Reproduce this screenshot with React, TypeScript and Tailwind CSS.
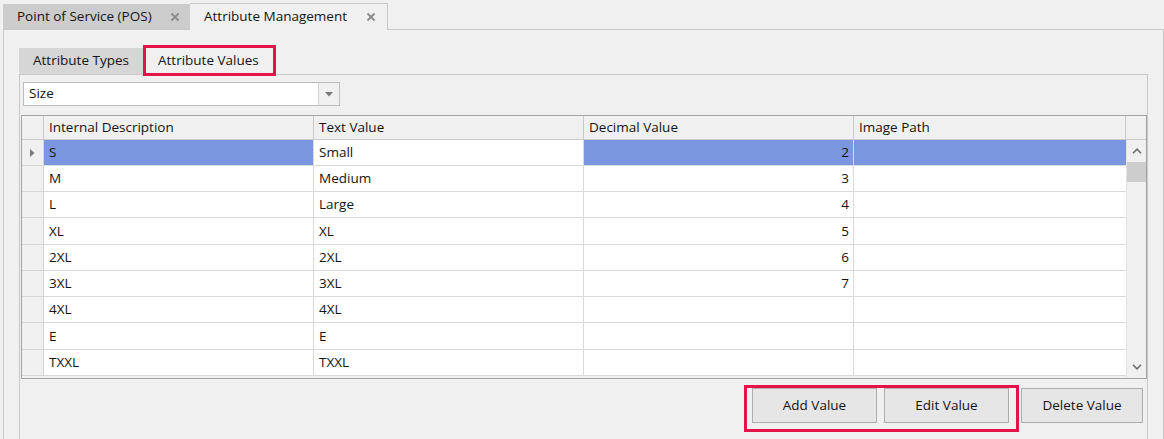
import React from "react";

const rows: [string, string, string][] = [
  ["S", "Small", "2"],
  ["M", "Medium", "3"],
  ["L", "Large", "4"],
  ["XL", "XL", "5"],
  ["2XL", "2XL", "6"],
  ["3XL", "3XL", "7"],
  ["4XL", "4XL", ""],
  ["E", "E", ""],
  ["TXXL", "TXXL", ""],
];

function CloseX() {
  return (
    <svg width="10" height="10" viewBox="0 0 10 10" className="shrink-0">
      <path d="M1.5 1.5 L8.5 8.5 M8.5 1.5 L1.5 8.5" stroke="#8a8a8a" strokeWidth="1.8" />
    </svg>
  );
}

export default function App() {
  return (
    <div
      className="w-[1164px] h-[439px] bg-[#f0f0f0] flex flex-col overflow-hidden text-[#141414] text-[13.5px] leading-none"
      style={{ fontFamily: '"Open Sans", "Noto Sans", sans-serif' }}
    >
      {/* outer tab strip */}
      <div className="flex items-end h-[30px] pl-[3px] shrink-0">
        <div className="h-[26px] w-[187px] bg-[#cccccc] border-b border-[#c8c8c8] flex items-center pl-[14px] pr-[10px] justify-between">
          <span>Point of Service (POS)</span>
          <CloseX />
        </div>
        <div className="h-[27px] w-[198px] bg-[#f0f0f0] border-t border-r border-[#c8c8c8] flex items-center pl-[14px] pr-[11px] justify-between">
          <span>Attribute Management</span>
          <CloseX />
        </div>
        <div className="flex-1 h-px bg-[#c8c8c8]" />
      </div>

      {/* outer panel */}
      <div className="flex-1 ml-[3px] border-l border-r border-[#c8c8c8] pl-[15px] pr-[15px] pt-[15px] flex flex-col min-h-0">
        {/* inner tab strip */}
        <div className="flex items-start h-[29px] shrink-0">
          <div className="mt-[3px] h-[26px] w-[124px] bg-[#d6d6d6] flex items-center pl-[14px]">
            Attribute Types
          </div>
          <div className="relative z-10 h-[31px] w-[133px] border-[3px] border-[#e5124b] bg-[#f0f0f0] flex items-center pl-[12px]">
            Attribute Values
          </div>
        </div>

        {/* inner panel */}
        <div className="flex-1 border-l border-t border-r border-[#c8c8c8] flex flex-col min-h-0">
          {/* combo */}
          <div className="pl-[3px] pt-[7px] shrink-0">
            <div className="w-[317px] h-[24px] bg-white border border-[#bdbdbd] flex">
              <div className="flex-1 flex items-center pl-[5px]">Size</div>
              <div className="w-[21px] border-l border-[#d4d4d4] bg-[#f0f0f0] flex items-center justify-center">
                <svg width="8" height="5" viewBox="0 0 8 5">
                  <path d="M0 0 H8 L4 4.5 Z" fill="#7a7a7a" />
                </svg>
              </div>
            </div>
          </div>

          {/* grid */}
          <div className="mt-[9px] ml-px w-[1126px] h-[264px] border border-[#a3a3a3] bg-[#f0f0f0] flex flex-col shrink-0 overflow-hidden">
            {/* header */}
            <div className="flex h-[24px] shrink-0 border-b border-[#c9c9c9] bg-[#f0f0f0]">
              <div className="w-[22px] border-r border-[#c9c9c9]" />
              <div className="w-[270px] border-r border-[#c9c9c9] flex items-center pl-[5px]">Internal Description</div>
              <div className="w-[270px] border-r border-[#c9c9c9] flex items-center pl-[5px]">Text Value</div>
              <div className="w-[270px] border-r border-[#c9c9c9] flex items-center pl-[5px]">Decimal Value</div>
              <div className="w-[272px] border-r border-[#c9c9c9] flex items-center pl-[5px]">Image Path</div>
              <div className="w-[20px]" />
            </div>
            {/* body */}
            <div className="flex flex-1 min-h-0">
              <div className="flex flex-col overflow-hidden">
                {rows.map((r, i) => {
                  const sel = i === 0;
                  const selBg = sel ? "bg-[#7a96df]" : "bg-white";
                  const h = i === 3 || i === 7 ? "h-[27px]" : "h-[26px]";
                  return (
                    <div key={i} className={`flex ${h} shrink-0`}>
                      <div className="w-[22px] border-r border-b border-[#d4d4d4] bg-[#f0f0f0] flex items-center justify-center">
                        {sel && (
                          <svg width="5" height="8" viewBox="0 0 5 8">
                            <path d="M0 0 L4.5 4 L0 8 Z" fill="#7a7a7a" />
                          </svg>
                        )}
                      </div>
                      <div className={`w-[270px] border-r border-b border-[#dadada] ${selBg} flex items-center pl-[5px] pt-px`}>{r[0]}</div>
                      <div className="w-[270px] border-r border-b border-[#dadada] bg-white flex items-center pl-[5px] pt-px">{r[1]}</div>
                      <div className={`w-[270px] border-r border-b border-[#dadada] ${selBg} flex items-center justify-end pr-[4px] pt-px`}>{r[2]}</div>
                      <div className={`w-[272px] border-b border-[#dadada] ${selBg}`} />
                    </div>
                  );
                })}
              </div>
              {/* scrollbar */}
              <div className="w-[20px] bg-[#f0f0f0] flex flex-col border-l border-[#e4e4e4]">
                <div className="h-[22px] flex items-center justify-center">
                  <svg width="10" height="6" viewBox="0 0 10 6">
                    <path d="M1 5.2 L5 1.2 L9 5.2" stroke="#6e6e6e" strokeWidth="1.6" fill="none" />
                  </svg>
                </div>
                <div className="h-[20px] bg-[#cdcdcd]" />
                <div className="flex-1" />
                <div className="h-[22px] flex items-center justify-center">
                  <svg width="10" height="6" viewBox="0 0 10 6">
                    <path d="M1 0.8 L5 4.8 L9 0.8" stroke="#6e6e6e" strokeWidth="1.6" fill="none" />
                  </svg>
                </div>
              </div>
            </div>
          </div>

          {/* buttons */}
          <div className="flex justify-end items-start mt-[6px] pr-[4px] shrink-0">
            <div className="flex gap-[7px] border-[3px] border-[#e5124b] pl-[5px] pr-[7px] pb-[6px]">
              <button className="w-[125px] h-[35px] bg-[#e6e6e6] border border-[#adadad] text-[13.5px] pt-px">Add Value</button>
              <button className="w-[125px] h-[35px] bg-[#e6e6e6] border border-[#adadad] text-[13.5px] pt-px">Edit Value</button>
            </div>
            <button className="ml-[2px] mt-[3px] w-[122px] h-[35px] bg-[#e6e6e6] border border-[#adadad] text-[13.5px] pt-px">Delete Value</button>
          </div>
        </div>
      </div>
    </div>
  );
}
